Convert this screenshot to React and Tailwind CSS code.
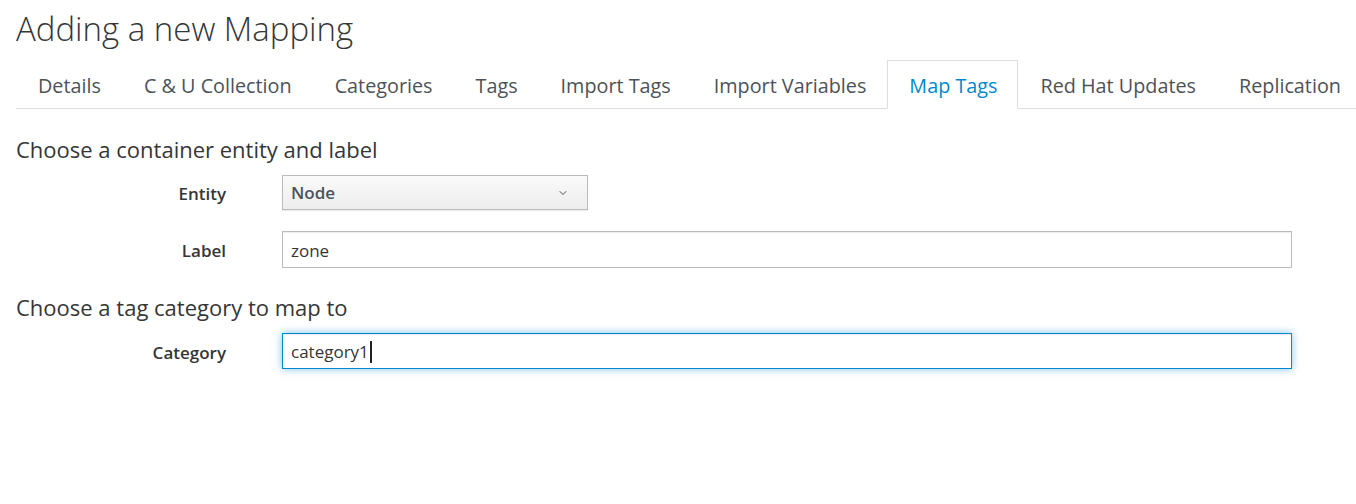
import { ChevronDown } from "lucide-react";

const tabs = [
  "Details",
  "C & U Collection",
  "Categories",
  "Tags",
  "Import Tags",
  "Import Variables",
  "Map Tags",
  "Red Hat Updates",
  "Replication",
];

function Row({ label, children }) {
  return (
    <div className="flex items-center">
      <label className="w-[210px] shrink-0 pt-[3px] text-right text-[17px] font-semibold text-[#363636]">
        {label}
      </label>
      <div className="ml-[56px]">{children}</div>
    </div>
  );
}

export default function App() {
  return (
    <div
      className="min-h-[504px] overflow-hidden bg-white px-4 text-[#363636]"
      style={{ fontFamily: '"Open Sans", sans-serif' }}
    >
      <h1 className="pt-[8px] text-[33px] font-light leading-[42px] text-[#363636]">
        Adding a new Mapping
      </h1>

      <ul className="-mr-4 mt-[10px] flex border-b border-[#ddd]">
        {tabs.map((t) =>
          t === "Map Tags" ? (
            <li
              key={t}
              className="-mb-px shrink-0 whitespace-nowrap rounded-t-[1px] border border-b-white border-[#ddd] bg-white pb-[9px] pl-[21px] pr-[20px] pt-[12px] text-[19.8px] leading-[25px] text-[#0088ce]"
            >
              {t}
            </li>
          ) : (
            <li
              key={t}
              className="shrink-0 whitespace-nowrap border border-transparent pb-[9px] pl-[21px] pr-[20px] pt-[12px] text-[19.8px] leading-[25px] text-[#4d5258]"
            >
              {t}
            </li>
          )
        )}
      </ul>

      <h2 className="mt-[26px] text-[22px] leading-[28px] text-[#363636]">
        Choose a container entity and label
      </h2>

      <div className="mt-[12px] flex flex-col gap-[21px]">
        <Row label="Entity">
          <div className="flex h-[35px] w-[306px] items-center justify-between border border-[#bbb] bg-gradient-to-b from-[#fafafa] to-[#ededed] pl-[8px] pr-[18px] pt-[1px] shadow-[0_1px_1px_rgba(3,3,3,0.08)]">
            <span className="text-[17px] font-semibold text-[#4d5258]">Node</span>
            <ChevronDown className="h-[12px] w-[12px] text-[#4d5258]" strokeWidth={2} />
          </div>
        </Row>
        <Row label="Label">
          <div className="flex h-[37px] w-[1010px] items-center border border-[#bbb] bg-white px-[8px] pt-[2px] text-[17px] text-[#363636] shadow-[inset_0_1px_1px_rgba(3,3,3,0.075)]">
            zone
          </div>
        </Row>
      </div>

      <h2 className="mt-[25px] text-[22px] leading-[28px] text-[#363636]">
        Choose a tag category to map to
      </h2>

      <div className="mt-[12px]">
        <Row label="Category">
          <div className="flex h-[36px] w-[1010px] items-center border border-[#0088ce] bg-white px-[8px] pt-[2px] text-[17px] text-[#363636] shadow-[inset_0_1px_1px_rgba(3,3,3,0.075),0_0_8px_rgba(0,136,206,0.5)]">
            category1
            <span className="ml-[1px] inline-block h-[22px] w-[2px] bg-[#222]" />
          </div>
        </Row>
      </div>
    </div>
  );
}
